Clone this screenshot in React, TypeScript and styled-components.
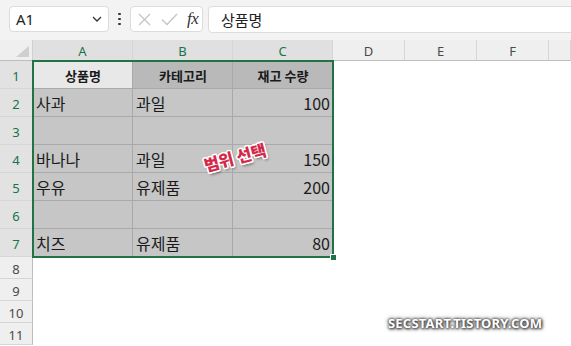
import React from "react";
import styled, { createGlobalStyle, css } from "styled-components";

const GlobalStyle = createGlobalStyle`
  html, body { margin: 0; padding: 0; background: #ffffff; }
  body { font-family: "Noto Sans", "Noto Sans CJK KR", sans-serif; overflow: hidden; }
  * { box-sizing: border-box; }
`;

const Page = styled.div`
  position: relative;
  width: 571px;
  height: 346px;
  overflow: hidden;
  background: #ffffff;
`;

const Toolbar = styled.div`
  display: flex;
  align-items: center;
  height: 40px;
  padding: 0 0 2px 9px;
  background: #f3f3f3;
`;

const NameBox = styled.div`
  display: flex;
  align-items: center;
  justify-content: space-between;
  width: 100px;
  height: 26px;
  padding: 0 6px 0 6px;
  background: #ffffff;
  border: 1px solid #dcdcdc;
  border-radius: 4px;
  font-size: 15px;
  color: #222;
`;

const Kebab = styled.div`
  display: flex;
  flex-direction: column;
  align-items: center;
  justify-content: center;
  gap: 2.5px;
  width: 21px;
  height: 26px;
  span {
    width: 2.5px;
    height: 2.5px;
    border-radius: 50%;
    background: #333;
  }
`;

const FxBox = styled.div`
  display: flex;
  align-items: center;
  width: 73px;
  height: 26px;
  padding-left: 7px;
  gap: 10px;
  background: #ffffff;
  border: 1px solid #dcdcdc;
  border-radius: 4px;
`;

const FxLabel = styled.span`
  font-family: "Liberation Serif", "DejaVu Serif", serif;
  font-style: italic;
  font-size: 17px;
  color: #333;
  margin-left: -1px;
  letter-spacing: -0.5px;
`;

const FormulaBox = styled.div`
  flex: 1;
  display: flex;
  align-items: center;
  height: 27px;
  margin-left: 5px;
  margin-right: -6px;
  padding-left: 12px;
  background: #ffffff;
  border: 1px solid #dcdcdc;
  border-radius: 4px;
  font-family: "Noto Sans CJK KR", sans-serif;
  font-size: 15px;
  color: #222;
`;

/* Sheet stacks the cell grid and an overlay grid (same tracks) in one area */
const Sheet = styled.div`
  position: relative;
  display: grid;
  height: 306px;
  > * {
    grid-area: 1 / 1;
  }
`;

const trackTemplate = css`
  display: grid;
  grid-template-columns: 33px 100px 100px 100px 72px 72px 72px 1fr;
  grid-template-rows: 21px repeat(7, 28px) repeat(4, 22px) 1fr;
`;

const CellGrid = styled.div`
  ${trackTemplate}
`;

const OverlayGrid = styled.div`
  ${trackTemplate}
  pointer-events: none;
  z-index: 2;
`;

const Corner = styled.div`
  position: relative;
  background: #efefef;
  border-right: 1px solid #d0d0d0;
  border-bottom: 1px solid #bdbdbd;
  &::after {
    content: "";
    position: absolute;
    right: 3px;
    bottom: 3px;
    width: 0;
    height: 0;
    border-left: 13px solid transparent;
    border-bottom: 11px solid #cfcfcf;
  }
`;

const ColHeader = styled.div<{ $selected?: boolean }>`
  display: flex;
  align-items: center;
  justify-content: center;
  font-size: 13px;
  padding-top: 1px;
  border-right: 1px solid #d6d6d6;
  border-bottom: 1px solid #bdbdbd;
  background: ${(p) => (p.$selected ? "#e0e0e0" : "#efefef")};
  color: ${(p) => (p.$selected ? "#137648" : "#4a4a4a")};
`;

const RowHeader = styled.div<{ $selected?: boolean }>`
  display: flex;
  align-items: center;
  justify-content: center;
  font-size: 13px;
  padding-top: 2px;
  border-right: 1px solid #bdbdbd;
  border-bottom: 1px solid #d6d6d6;
  background: ${(p) => (p.$selected ? "#e2e2e2" : "#efefef")};
  color: ${(p) => (p.$selected ? "#137648" : "#4a4a4a")};
`;

type CellKind = "active" | "head" | "data" | "blank";

const Cell = styled.div<{ $kind: CellKind; $right?: boolean }>`
  display: flex;
  align-items: center;
  justify-content: ${(p) => (p.$right ? "flex-end" : "flex-start")};
  padding: 1px 2px 0 3px;
  font-family: "Noto Sans CJK KR", sans-serif;
  font-size: 16px;
  color: #1a1a1a;
  white-space: nowrap;
  ${(p) =>
    p.$kind === "blank"
      ? css`
          background: #ffffff;
        `
      : css`
          border-right: 1px solid #a9a9a9;
          border-bottom: 1px solid #a9a9a9;
        `}
  ${(p) =>
    p.$kind === "active" &&
    css`
      background: #e8e8e8;
    `}
  ${(p) =>
    p.$kind === "head" &&
    css`
      background: #b9b9b9;
    `}
  ${(p) =>
    (p.$kind === "active" || p.$kind === "head") &&
    css`
      justify-content: center;
      font-size: 13px;
      font-weight: 700;
    `}
  ${(p) =>
    p.$kind === "data" &&
    css`
      background: #c6c6c6;
    `}
`;

const Selection = styled.div`
  position: relative;
  grid-column: 2 / 5;
  grid-row: 2 / 9;
  margin: -1px;
  border: 2px solid #217346;
`;

const FillHandle = styled.div`
  position: absolute;
  right: -5px;
  bottom: -5px;
  width: 7px;
  height: 7px;
  background: #217346;
  border: 1px solid #ffffff;
`;

const Stamp = styled.div`
  position: absolute;
  left: 203px;
  top: 105px;
  transform: rotate(-15deg);
  font-family: "Noto Sans CJK KR", sans-serif;
  font-weight: 900;
  font-size: 16.5px;
  letter-spacing: -0.2px;
  color: #d4294b;
  z-index: 3;
  text-shadow: -1.2px -1.2px 0 #fff, 1.2px -1.2px 0 #fff, -1.2px 1.2px 0 #fff,
    1.2px 1.2px 0 #fff, 0 1.5px 0 #fff, 0 -1.5px 0 #fff, 1.5px 0 0 #fff,
    -1.5px 0 0 #fff, 1px 2.5px 3px rgba(0, 0, 0, 0.55);
`;

const Watermark = styled.div`
  position: absolute;
  left: 388px;
  top: 314px;
  font-family: "Noto Sans", sans-serif;
  font-weight: 700;
  font-size: 13px;
  letter-spacing: 0.2px;
  color: #ffffff;
  text-shadow: 0 0 2px #444, 0 0 3px #555, 0 0 5px #666, 1px 1px 3px #333;
  z-index: 4;
`;

const IconX = () => (
  <svg width="13" height="13" viewBox="0 0 13 13" fill="none">
    <path d="M1 1 L12 12 M12 1 L1 12" stroke="#c4c4c4" strokeWidth="1.3" />
  </svg>
);

const IconCheck = () => (
  <svg width="17" height="13" viewBox="0 0 17 13" fill="none">
    <path d="M1 6.5 L6 11.5 L16 1" stroke="#c4c4c4" strokeWidth="1.3" />
  </svg>
);

const Chevron = () => (
  <svg width="10" height="6" viewBox="0 0 10 6" fill="none">
    <path d="M1 1 L5 5 L9 1" stroke="#333" strokeWidth="1.3" />
  </svg>
);

const columns = ["A", "B", "C", "D", "E", "F", ""];

const rows: string[][] = [
  ["상품명", "카테고리", "재고 수량"],
  ["사과", "과일", "100"],
  ["", "", ""],
  ["바나나", "과일", "150"],
  ["우유", "유제품", "200"],
  ["", "", ""],
  ["치즈", "유제품", "80"],
];

export default function App() {
  return (
    <Page>
      <GlobalStyle />
      <Toolbar>
        <NameBox>
          <span>A1</span>
          <Chevron />
        </NameBox>
        <Kebab>
          <span />
          <span />
          <span />
        </Kebab>
        <FxBox>
          <IconX />
          <IconCheck />
          <FxLabel>fx</FxLabel>
        </FxBox>
        <FormulaBox>상품명</FormulaBox>
      </Toolbar>
      <Sheet>
        <CellGrid>
          <Corner />
          {columns.map((c, i) => (
            <ColHeader key={`h${i}`} $selected={i < 3}>
              {c}
            </ColHeader>
          ))}
          {Array.from({ length: 11 }).map((_, r) => (
            <React.Fragment key={`r${r}`}>
              <RowHeader $selected={r < 7}>{r + 1}</RowHeader>
              {Array.from({ length: 7 }).map((__, c) => {
                const inRange = r < 7 && c < 3;
                const value = inRange ? rows[r][c] : "";
                let kind: CellKind = "blank";
                if (inRange) {
                  if (r === 0 && c === 0) kind = "active";
                  else if (r === 0) kind = "head";
                  else kind = "data";
                }
                return (
                  <Cell key={`c${r}-${c}`} $kind={kind} $right={inRange && c === 2 && r > 0}>
                    {value}
                  </Cell>
                );
              })}
            </React.Fragment>
          ))}
        </CellGrid>
        <OverlayGrid>
          <Selection>
            <FillHandle />
          </Selection>
        </OverlayGrid>
        <Stamp>범위 선택</Stamp>
      </Sheet>
      <Watermark>SECSTART.TISTORY.COM</Watermark>
    </Page>
  );
}
